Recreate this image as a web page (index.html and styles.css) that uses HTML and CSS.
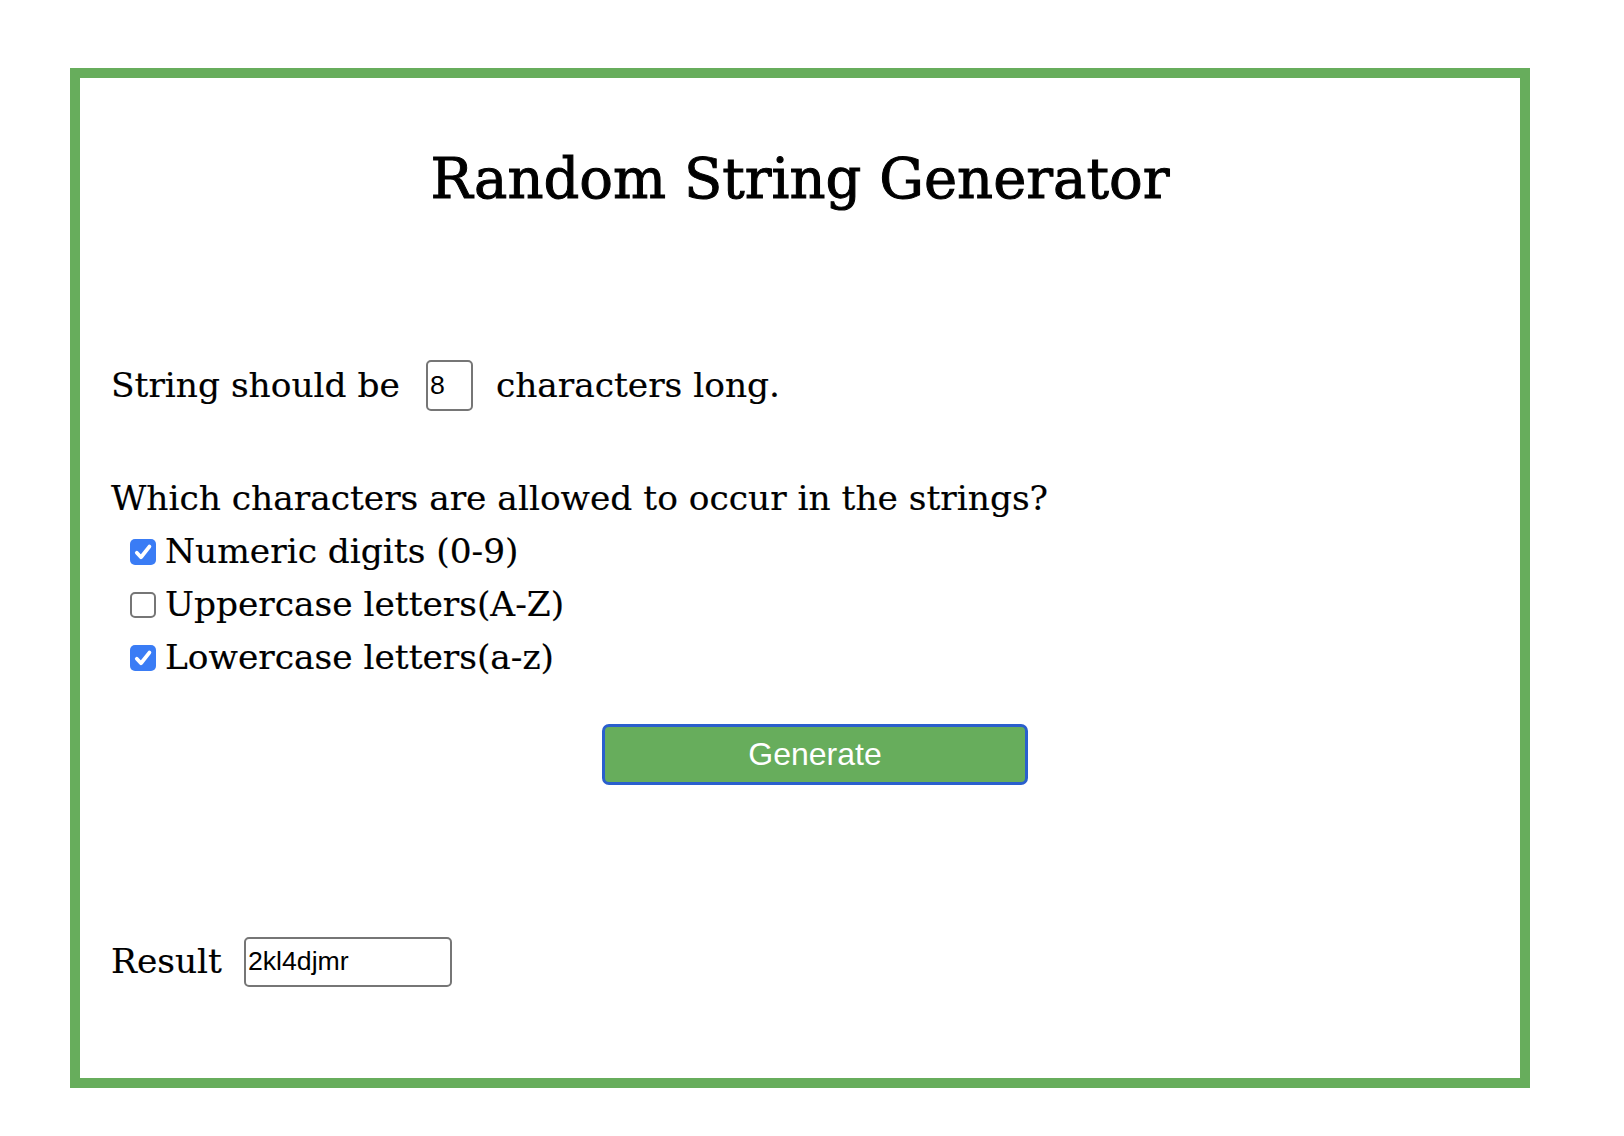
FILE: index.html
```html
<!DOCTYPE html>
<html lang="en">
<head>
<meta charset="utf-8">
<title>Random String Generator</title>
<link rel="stylesheet" href="styles.css">
</head>
<body>
<main class="card">
  <h1 class="title">Random String Generator</h1>
  <form class="content">
    <div class="length-row">
      <span>String should be</span>
      <input class="field field-num" type="text" value="8">
      <span>characters long.</span>
    </div>
    <p class="question">Which characters are allowed to occur in the strings?</p>
    <div class="options">
      <label class="option">
        <span class="box box-on"><svg viewBox="0 0 26 26" width="26" height="26"><path d="M6.8 13.8 L11 18.2 L19.4 7.6" fill="none" stroke="#fff" stroke-width="3.8" stroke-linecap="round" stroke-linejoin="round"/></svg></span>
        <span>Numeric digits (0-9)</span>
      </label>
      <label class="option">
        <span class="box box-off"></span>
        <span>Uppercase letters(A-Z)</span>
      </label>
      <label class="option">
        <span class="box box-on"><svg viewBox="0 0 26 26" width="26" height="26"><path d="M6.8 13.8 L11 18.2 L19.4 7.6" fill="none" stroke="#fff" stroke-width="3.8" stroke-linecap="round" stroke-linejoin="round"/></svg></span>
        <span>Lowercase letters(a-z)</span>
      </label>
    </div>
    <div class="actions">
      <button class="generate" type="button">Generate</button>
    </div>
    <div class="result-row">
      <span>Result</span>
      <input class="field field-result" type="text" value="2kl4djmr">
    </div>
  </form>
</main>
</body>
</html>
```

FILE: styles.css
```css
html, body {
  margin: 0;
  padding: 0;
  background: #ffffff;
}

body {
  font-family: "DejaVu Serif", "Liberation Serif", serif;
  color: #000;
}

.card {
  box-sizing: border-box;
  width: 1460px;
  height: 1020px;
  margin: 68px 0 0 70px;
  border: 10px solid #67ad5c;
  padding-top: 68px;
}

.title {
  margin: 0;
  font-size: 56px;
  line-height: 66px;
  font-weight: normal;
  text-align: center;
  color: #000;
  -webkit-text-stroke: 1px #000;
}

.content {
  padding: 0 1px 0 31px;
  margin: 0;
  font-size: 34.4px;
  line-height: 53px;
  -webkit-text-stroke: 0.2px #000;
}

.length-row {
  display: flex;
  align-items: center;
  height: 53px;
  margin-top: 147px;
}

.field {
  box-sizing: border-box;
  border: 2px solid #767676;
  border-radius: 5px;
  font-family: "Liberation Sans", Arial, sans-serif;
  font-size: 26.7px;
  color: #000;
  padding: 0 2px;
  margin: 0;
  background: #fff;
  -webkit-text-stroke: 0;
}

.field-num {
  width: 47px;
  height: 51px;
  margin: 0 23px 0 26px;
}

.question {
  margin: 60px 0 0 0;
}

.options {
  display: flex;
  flex-direction: column;
  padding-left: 19px;
}

.option {
  display: flex;
  align-items: center;
  gap: 9px;
  height: 53px;
}

.box {
  box-sizing: border-box;
  width: 26px;
  height: 26px;
  border-radius: 5px;
  flex: none;
  display: block;
}

.box svg {
  display: block;
}

.box-on {
  background: #3a7cf5;
}

.box-off {
  border: 2px solid #767676;
  background: #fff;
}

.actions {
  display: flex;
  justify-content: center;
  margin-top: 40px;
}

.generate {
  box-sizing: border-box;
  width: 426px;
  height: 61px;
  background: #67ad5c;
  border: 3.5px solid #2a5fcd;
  border-radius: 7px;
  color: #fff;
  font-family: "Liberation Sans", Arial, sans-serif;
  font-size: 32px;
  padding: 0;
  -webkit-text-stroke: 0;
}

.result-row {
  display: flex;
  align-items: center;
  height: 53px;
  margin-top: 150px;
  gap: 22px;
}

.field-result {
  width: 208px;
  height: 50px;
}
```
